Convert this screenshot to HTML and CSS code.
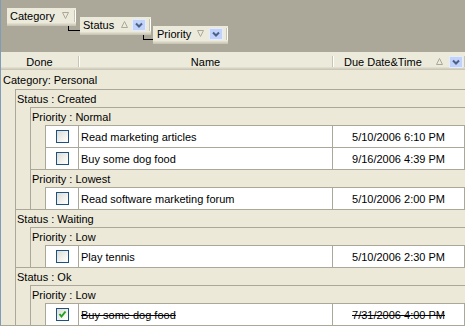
FILE: index.html
```html
<!DOCTYPE html>
<html lang="en">
<head>
    <meta charset="UTF-8">
    <title>Task Grid</title>
    <link rel="stylesheet" href="styles.css">
</head>
<body>
    <div class="grid">
        <!-- group by panel -->
        <div class="group-panel">
            <div class="chip chip-category">
                <span class="chip-label">Category</span>
                <svg class="sort" width="7" height="7" viewBox="0 0 7 7"><polygon points="0.5,0.5 6.5,0.5 3.5,6.5"/></svg>
                <span class="sep"></span>
            </div>
            <div class="chip chip-status">
                <span class="chip-label">Status</span>
                <svg class="sort" width="7" height="7" viewBox="0 0 7 7"><polygon points="3.5,0.5 6.5,6.5 0.5,6.5"/></svg>
                <span class="drop"><svg width="12" height="10" viewBox="0 0 12 10"><path d="M3 3.5 L6 6.5 L9 3.5"/></svg></span>
                <span class="sep"></span>
            </div>
            <div class="chip chip-priority">
                <span class="chip-label">Priority</span>
                <svg class="sort" width="7" height="7" viewBox="0 0 7 7"><polygon points="0.5,0.5 6.5,0.5 3.5,6.5"/></svg>
                <span class="drop"><svg width="12" height="10" viewBox="0 0 12 10"><path d="M3 3.5 L6 6.5 L9 3.5"/></svg></span>
                <span class="sep"></span>
            </div>
        </div>

        <!-- column headers -->
        <div class="header">
            <div class="col col-done"><span class="col-label">Done</span><span class="sep"></span></div>
            <div class="col col-name"><span class="col-label">Name</span><span class="sep"></span></div>
            <div class="col col-due">
                <span class="col-label">Due Date&amp;Time</span>
                <svg class="sort" width="7" height="7" viewBox="0 0 7 7"><polygon points="3.5,0.5 6.5,6.5 0.5,6.5"/></svg>
                <span class="drop"><svg width="12" height="10" viewBox="0 0 12 10"><path d="M3 3.5 L6 6.5 L9 3.5"/></svg></span>
                <span class="sep"></span>
            </div>
        </div>

        <div class="rows">
            <div class="cat-head">Category: Personal</div>
            <div class="group-body">
                <div class="group">
                    <div class="group-head">Status : Created</div>
                    <div class="group-body">
                        <div class="group">
                            <div class="group-head">Priority : Normal</div>
                            <div class="group-body">
                                <div class="task">
                                    <div class="cell-check"><span class="checkbox"></span></div>
                                    <div class="cell-name">Read marketing articles</div>
                                    <div class="cell-due">5/10/2006 6:10 PM</div>
                                </div>
                                <div class="task">
                                    <div class="cell-check"><span class="checkbox"></span></div>
                                    <div class="cell-name">Buy some dog food</div>
                                    <div class="cell-due">9/16/2006 4:39 PM</div>
                                </div>
                            </div>
                        </div>
                        <div class="group">
                            <div class="group-head">Priority : Lowest</div>
                            <div class="group-body">
                                <div class="task">
                                    <div class="cell-check"><span class="checkbox"></span></div>
                                    <div class="cell-name">Read software marketing forum</div>
                                    <div class="cell-due">5/10/2006 2:00 PM</div>
                                </div>
                            </div>
                        </div>
                    </div>
                </div>
                <div class="group">
                    <div class="group-head">Status : Waiting</div>
                    <div class="group-body">
                        <div class="group">
                            <div class="group-head">Priority : Low</div>
                            <div class="group-body">
                                <div class="task">
                                    <div class="cell-check"><span class="checkbox"></span></div>
                                    <div class="cell-name">Play tennis</div>
                                    <div class="cell-due">5/10/2006 2:30 PM</div>
                                </div>
                            </div>
                        </div>
                    </div>
                </div>
                <div class="group">
                    <div class="group-head">Status : Ok</div>
                    <div class="group-body">
                        <div class="group">
                            <div class="group-head">Priority : Low</div>
                            <div class="group-body">
                                <div class="task done">
                                    <div class="cell-check"><span class="checkbox"><svg width="11" height="11" viewBox="0 0 11 11"><path d="M2.5 5 L4.5 7.5 L8.5 2.5"/></svg></span></div>
                                    <div class="cell-name">Buy some dog food</div>
                                    <div class="cell-due">7/31/2006 4:00 PM</div>
                                </div>
                            </div>
                        </div>
                    </div>
                </div>
            </div>
        </div>
    </div>
</body>
</html>
```

FILE: styles.css
```css
body {
    margin: 0;
    font-family: "Liberation Sans", Arial, sans-serif;
    font-size: 11px;
    color: #000;
    background: #ece9d8;
    overflow: hidden;
}
.grid {
    width: 465px;
    height: 326px;
    box-sizing: border-box;
    border-left: 1px solid #7f9db9;
    border-bottom: 1px solid #aca899;
    background: #ece9d8;
    overflow: hidden;
}

/* group by panel */
.group-panel {
    height: 52px;
    box-sizing: border-box;
    padding: 8px 0 0 6px;
    background: #aca899;
    display: flex;
    align-items: flex-start;
}
.chip {
    position: relative;
    display: flex;
    align-items: center;
    height: 18px;
    box-sizing: border-box;
    padding: 0 1px 3px 3px;
    background: linear-gradient(#ebeadb 0 15px, #e2decd 15px 16px, #d6d2c2 16px 17px, #cbc7b8 17px);
}
.chip-label {
    flex: 1;
    padding-top: 1px;
}
.chip-category {
    width: 69px;
}
.chip-category .sort {
    margin-right: 5px;
}
.chip-status {
    width: 71px;
    margin: 9px 0 0 4px;
}
.chip-priority {
    width: 75px;
    margin: 18px 0 0 2px;
    padding-left: 4px;
}
.chip-status .sort,
.chip-priority .sort {
    margin-right: 4px;
}
.chip-priority .sort {
    margin-right: 5px;
}
.chip .drop {
    margin-right: 3px;
}
.chip-status::before,
.chip-priority::before {
    content: "";
    position: absolute;
    top: 9px;
    left: -12px;
    width: 12px;
    height: 5px;
    box-sizing: border-box;
    border-left: 1px solid #000;
    border-bottom: 1px solid #000;
}
.chip-priority::before {
    left: -10px;
    width: 10px;
}

.sort {
    display: block;
}
.sort polygon {
    fill: none;
    stroke: #aca899;
    stroke-width: 1;
}
.drop {
    display: flex;
    align-items: center;
    justify-content: center;
    width: 14px;
    height: 12px;
    box-sizing: border-box;
    border: 1px solid #e4ebfd;
    background: #c1d2fb;
}
.drop path {
    fill: none;
    stroke: #4d6185;
    stroke-width: 2;
}
.sep {
    display: block;
    width: 1px;
    height: 12px;
    background: #c7c5b2;
    box-shadow: 1px 0 #fff;
}

/* column headers */
.header {
    display: flex;
    height: 18px;
    background: linear-gradient(#ebeadb 0 15px, #e2decd 15px 16px, #d6d2c2 16px 17px, #cbc7b8 17px);
}
.col {
    display: flex;
    align-items: center;
    padding-bottom: 2px;
    box-sizing: border-box;
}
.col .sep {
    height: 11px;
    margin-top: 3px;
}
.col-label {
    flex: 1;
    text-align: center;
    padding-top: 4px;
}
.col-done {
    width: 78px;
}
.col-name {
    width: 254px;
}
.col-due {
    width: 132px;
}
.col-due .col-label {
    text-align: left;
    padding-left: 11px;
}
.col-due .sort {
    margin: 2px 6px 0 0;
}
.col-due .drop {
    margin: 3px 1px 0 0;
}

/* grouped rows */
.cat-head {
    height: 19px;
    line-height: 17px;
    padding: 2px 0 0 2px;
    box-sizing: border-box;
}
.group-body {
    padding-left: 14px;
}
.group {
    border-top: 1px solid #aca899;
    border-left: 1px solid #aca899;
}
.group-head {
    height: 17px;
    line-height: 16px;
    padding: 1px 0 0 1px;
    box-sizing: border-box;
}
.task {
    display: flex;
    height: 22px;
    box-sizing: border-box;
    border-top: 1px solid #aca899;
    border-left: 1px solid #aca899;
    background: #fff;
    line-height: 20px;
}
.task > div {
    padding-top: 1px;
    box-sizing: border-box;
}
.cell-check {
    width: 33px;
    border-right: 1px solid #aca899;
    display: flex;
    align-items: center;
    justify-content: center;
}
.cell-name {
    width: 254px;
    padding-left: 2px;
    border-right: 1px solid #aca899;
}
.cell-due {
    width: 132px;
    text-align: center;
    border-right: 1px solid #aca899;
}
.checkbox {
    display: block;
    width: 13px;
    height: 13px;
    margin-top: -1px;
    box-sizing: border-box;
    border: 1px solid #1c5180;
    background: linear-gradient(135deg, #dcdcd5, #f6f6f3 70%, #fff);
}
.checkbox svg {
    display: block;
}
.checkbox path {
    fill: none;
    stroke: #21a121;
    stroke-width: 2;
}
.done .cell-name,
.done .cell-due {
    text-decoration: line-through;
}
```
